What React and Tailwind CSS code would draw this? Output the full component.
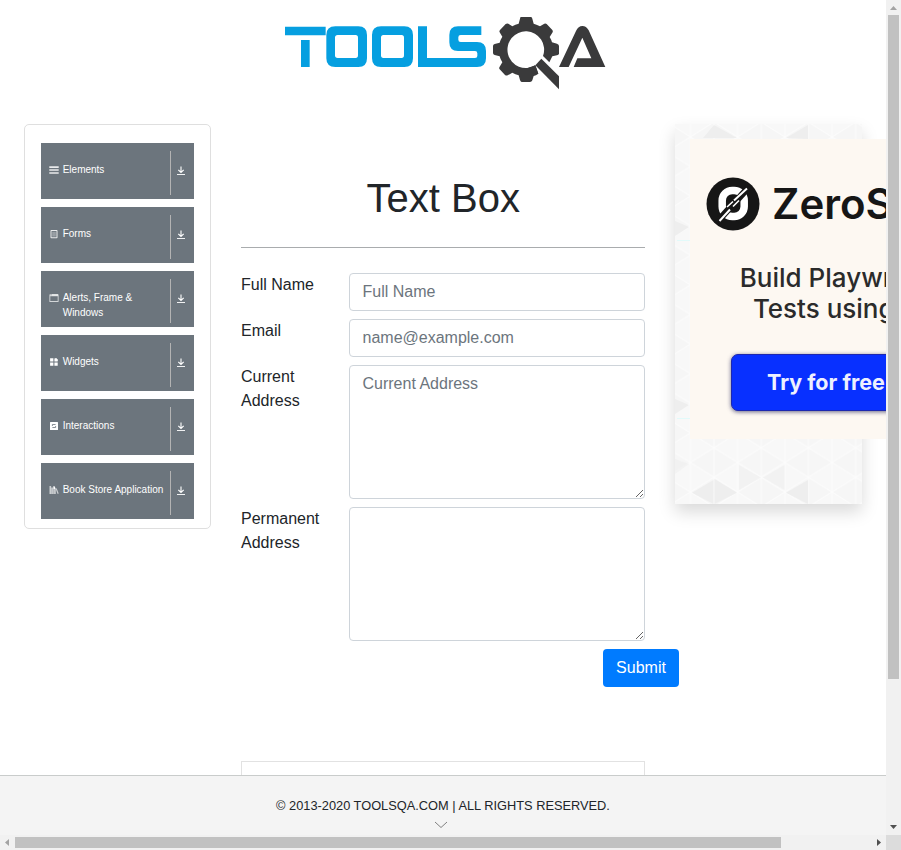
import React from "react";

const sans = "font-['Liberation_Sans',Arial,sans-serif]";

function Logo() {
  return (
    <svg viewBox="0 0 1020 285" className="h-[95px] w-[340px] shrink-0" role="img" aria-label="ToolsQA">
      <g fill="#069fe0">
        <path d="M30 65H152V91H30zM78 105H104V186H78z" />
        <path fillRule="evenodd" d="M181 64H250Q276 64 276 90V160Q276 186 250 186H181Q154 186 154 160V90Q154 64 181 64zM188 90Q180 90 180 98V151Q180 159 188 159H242Q249 159 249 151V98Q249 90 242 90z" />
        <path fillRule="evenodd" d="M318 64H388Q414 64 414 90V160Q414 186 388 186H318Q291 186 291 160V90Q291 64 318 64zM325 90Q318 90 318 98V151Q318 159 325 159H380Q387 159 387 151V98Q387 90 380 90z" />
        <path d="M429 64H456V159H600Q607 159 607 153V145Q607 138 600 138H549Q523 138 523 112V90Q523 64 549 64H619V90H557Q550 90 550 97V104Q550 111 557 111H606Q633 111 633 138V160Q633 186 606 186H429z" />
      </g>
      <g fill="#3a3a3b">
        <path
          fillRule="evenodd"
          d="M737 36H768Q771 37 772 41L776 56Q787 59 795 64L808 56Q812 54 815 57L832 75Q835 79 832 83L824 96Q829 104 831 112L846 116Q852 118 852 123V146Q851 150 846 151L832 154L823 172L804 153A55 55 0 1 0 781 181L790 206Q783 211 776 213L772 226Q770 231 765 231H740Q736 230 735 225L731 211Q721 208 712 203L698 211Q694 213 690 210L674 193Q671 189 674 185L682 172Q676 163 674 154L659 150Q654 149 654 144V123Q654 118 659 117L674 113Q677 103 682 95L674 82Q672 78 675 75L692 57Q696 54 700 56L712 64Q721 58 731 56L735 41Q736 37 737 36z"
        />
        <path d="M781 181L790 206L772 205L760 188z" />
        <path d="M799 161L852 214V253L781 181z" />
        <path d="M852 186L903 78Q910 63 922 63Q934 63 941 76L991 186H896L907 160H949L922 98L881 186z" />
      </g>
    </svg>
  );
}

const icons = {
  bars: <path opacity=".85" d="M0.3 1.3h9.4v1.6h-9.4zM0.3 4.2h9.4v1.6h-9.4zM0.3 7.2h9.4v1.6h-9.4z" />,
  form: (
    <>
      <path opacity=".85" fillRule="evenodd" d="M2.3 1h5.4q.8 0 .8.8v6.6q0 .8-.8.8H2.3q-.8 0-.8-.8V1.8q0-.8.8-.8zM2.5 2v6.2h5V2z" />
      <path opacity=".3" d="M3.2 2.8h3.6v4.8H3.2z" />
    </>
  ),
  window: (
    <>
      <path fillRule="evenodd" opacity=".7" d="M1 1.2h8q.6 0 .6.6v6.6q0 .6-.6.6H1q-.6 0-.6-.6V1.8q0-.6.6-.6zM1.3 3.3v4.8h7.4V3.3z" />
      <path opacity=".7" d="M3 1.2h6v1.4H3z" />
    </>
  ),
  widgets: <path d="M1.1 1.3h3.3v3.3H1.1zM5.4 1.5l1.8-.5 1.8 1.8-.4 1.8H5.4zM1.1 5.5h3.3v3.3H1.1zM5.4 5.5h3.300v3.300H5.400z" />,
  interactions: (
    <>
      <path d="M1.5 1h7q.5 0 .5.5v7q0 .5-.5.5h-7Q1 9 1 8.5v-7Q1 1 1.5 1z" />
      <path d="M3.4 5V3.500h3.200M6.600 5v1.500H3.400" fill="none" stroke="#6c757d" strokeWidth=".8" />
    </>
  ),
  books: (
    <>
      <path opacity=".65" d="M.5 1h1.600v8H.5zM6.600 3.700l1.100-.5L9.700 8.500l-1.100.5z" />
      <path d="M2.500 2.500h1.100V9H2.500zM4.300 1.200h1.300l.9 2V9H5.400V4H4.800V9H4.300z" />
    </>
  ),
};

const menu = [
  { label: "Elements", icon: "bars" },
  { label: "Forms", icon: "form" },
  { label: "Alerts, Frame & Windows", icon: "window" },
  { label: "Widgets", icon: "widgets" },
  { label: "Interactions", icon: "interactions" },
  { label: "Book Store Application", icon: "books" },
];

function MenuItem({ label, icon }) {
  return (
    <div className="flex h-14 bg-[#6c757d] text-white">
      <div className="flex w-[129px] gap-[3.7px] pt-[19px] pl-2">
        <svg viewBox="0 0 10 10" fill="currentColor" className="mt-[3px] size-[10px] shrink-0">
          {icons[icon]}
        </svg>
        <span className={"text-[10px] leading-[15px] " + (icon === "window" ? "w-20" : "whitespace-nowrap")}>{label}</span>
      </div>
      <div className="mt-2 flex h-11 w-6 border-l border-[#b3b3b3] pt-[15px] pl-[5px]">
        <svg viewBox="0 0 10 10" fill="none" stroke="currentColor" className="size-[10px]">
          <path d="M5 .5v6M2.300 3.800L5 6.500 7.700 3.800" strokeWidth="1.100" />
          <path d="M1 8.500h8" strokeWidth=".9" />
        </svg>
      </div>
    </div>
  );
}

const fieldClass =
  "block w-[296px] resize-none rounded border border-[#ced4da] bg-white px-[12.5px] py-1.5 text-base leading-6 text-[#495057] outline-none placeholder:text-[#6c757d] placeholder:opacity-100";

function Row({ label, children }) {
  return (
    <div className="flex justify-between">
      <label className="w-[90px] text-base leading-6">{label}</label>
      {children}
    </div>
  );
}

function TrianglePattern() {
  return (
    <svg className="col-start-1 row-start-1 h-[380px] w-[187px]">
      <defs>
        <pattern id="mesh" width="47.2" height="29.6" x="39" y="-1.9" patternUnits="userSpaceOnUse">
          <rect width="47.2" height="29.6" fill="#f8f8f8" />
          <path d="M0 0L23.6 14.8L0 29.6zM47.2 0V29.6L23.6 14.8z" fill="#f6f6f6" />
          <path d="M0 0V29.6M47.2 0V29.6M23.6 0V29.6M0 0L47.2 29.6M0 29.6L47.2 0" stroke="#fcfcfc" strokeWidth="1.1" fill="none" />
        </pattern>
      </defs>
      <rect width="187" height="380" fill="url(#mesh)" />
      <g fill="#eeeeee">
        <path d="M17 368.7L38.5 356V380zM39.5 355L62 368.7L39.5 380zM111 368.7L133 356V380zM28 14L39 1L62 14zM111 14L133 1V15zM0 97L14 103L0 112zM0 275L14 281L0 290z" />
        <path opacity=".6" d="M64 341L86 353.5L64 366zM88 353.5L109.500 341V366zM0 335L14 340L0 350z" />
      </g>
      <path d="M2 116.500H15M2 294.500H15" stroke="#e2fafa" />
    </svg>
  );
}

function Ad() {
  return (
    <aside className="grid h-[380px] w-[187px] shrink-0 shadow-[0_8px_16px_rgba(0,0,0,0.15)]">
      <TrianglePattern />
      <div className="z-10 col-start-1 row-start-1 mt-[15px] ml-[15px] flex h-[300px] w-[300px] flex-col bg-[#fdf8f2] font-[Inter,sans-serif] text-[#2b2b2b]">
        <div className="flex h-[130px] items-center gap-3 pl-4">
          <svg viewBox="0 0 54 54" className="size-[54px] shrink-0">
            <circle cx="27" cy="27" r="26.5" fill="#161616" />
            <rect x="16.2" y="13.5" width="22" height="26" rx="10" fill="none" stroke="#fff" strokeWidth="7.500" />
            <path d="M11 45L42 11" stroke="#161616" strokeWidth="6.500" />
            <path d="M13.500 44L24 32.500M28 23.500L41 11.500" stroke="#fff" strokeWidth="2" />
            <path d="M21 30L27 24.500M27 29.500L33 23.500" stroke="#fff" strokeWidth="1.600" />
          </svg>
          <span className="text-[42px] leading-none font-semibold whitespace-nowrap text-[#161616]">ZeroStep</span>
        </div>
        <p className="-mt-[7px] text-center text-[26px] leading-[31px] font-medium whitespace-nowrap">
          Build Playwright
          <br />
          Tests using AI
        </p>
        <div className="mt-[30px] ml-[41px] h-[57px] w-[218px] rounded-[7px] border border-[#1d28b0] bg-[#0830ff] pl-[35px] text-[21.5px] leading-[54px] font-bold whitespace-nowrap text-[#eef0ff] shadow-[0_1px_4px_rgba(40,40,90,0.7)]">
          Try for free
        </div>
      </div>
    </aside>
  );
}

function VerticalScrollbar() {
  return (
    <div className="flex h-[835px] flex-col items-center justify-between bg-[#f1f1f1]">
      <div className="flex flex-col items-center">
        <svg className="h-[15px] w-[15px]">
          <path d="M4 10L7.500 6L11 10z" fill="#a3a3a3" />
        </svg>
        <div className="h-[664px] w-[11px] bg-[#c1c1c1]" />
      </div>
      <svg className="h-[15px] w-[15px]">
        <path d="M4 5H11L7.500 9z" fill="#505050" />
      </svg>
    </div>
  );
}

function HorizontalScrollbar() {
  return (
    <div className="flex h-[15px] items-center justify-between bg-[#f1f1f1]">
      <div className="flex items-center">
        <svg className="h-[15px] w-[15px]">
          <path d="M9 4V11L5 7.500z" fill="#a3a3a3" />
        </svg>
        <div className="h-[11px] w-[766px] bg-[#c1c1c1]" />
      </div>
      <svg className="h-[15px] w-[15px]">
        <path d="M6 4V11L10 7.500z" fill="#505050" />
      </svg>
    </div>
  );
}

export default function App() {
  return (
    <div className={"grid h-[850px] w-[901px] grid-cols-[886px_15px] grid-rows-[835px_15px] overflow-hidden bg-white text-[#212529] " + sans}>
      <div className="flex flex-col overflow-hidden">
        <div className="flex h-[775px] flex-col overflow-hidden">
          <header className="flex h-[124px] shrink-0 pt-[5px] pl-[275px]">
            <Logo />
          </header>
          <main className="flex items-start gap-[30px] pl-6">
            <nav className="flex h-[405px] w-[187px] shrink-0 flex-col gap-2 rounded-[5px] border border-[#dfdfdf] px-4 pt-[18px]">
              {menu.map((m) => (
                <MenuItem key={m.label} {...m} />
              ))}
            </nav>
            <section className="w-[404px] shrink-0 pt-[50px]">
              <h1 className="pl-[0.5px] text-center text-[40px] leading-[48px]">Text Box</h1>
              <hr className="mt-[25px] mb-[25px] border-t border-[#a9acae]" />
              <form className="flex flex-col gap-2" onSubmit={(e) => e.preventDefault()}>
                <Row label="Full Name">
                  <input className={fieldClass + " h-[38px]"} placeholder="Full Name" />
                </Row>
                <Row label="Email">
                  <input className={fieldClass + " h-[38px]"} placeholder="name@example.com" />
                </Row>
                <Row label="Current Address">
                  <textarea className={fieldClass + " h-[134px] resize-y!"} placeholder="Current Address" />
                </Row>
                <Row label="Permanent Address">
                  <textarea className={fieldClass + " h-[134px] resize-y!"} />
                </Row>
                <button className="ml-[362px] h-[38px] w-[76px] rounded bg-[#007bff] text-base leading-6 text-white">Submit</button>
              </form>
              <div className="mt-[74px] h-[90px] border border-[#e2e2e2]" />
            </section>
            <Ad />
          </main>
        </div>
        <footer className="flex h-[60px] shrink-0 flex-col items-center border-t border-[#c9cccb] bg-[#f4f4f4] pt-5">
          <span className="text-[12.8px] leading-5">© 2013-2020 TOOLSQA.COM | ALL RIGHTS RESERVED.</span>
          <svg viewBox="0 0 14 8" fill="none" stroke="#808080" className="mt-[5px] mr-[4px] h-2 w-[14px]">
            <path d="M1 1L7 6.500L13 1" />
          </svg>
        </footer>
      </div>
      <VerticalScrollbar />
      <HorizontalScrollbar />
      <div className="bg-[#dcdcdc]" />
    </div>
  );
}
